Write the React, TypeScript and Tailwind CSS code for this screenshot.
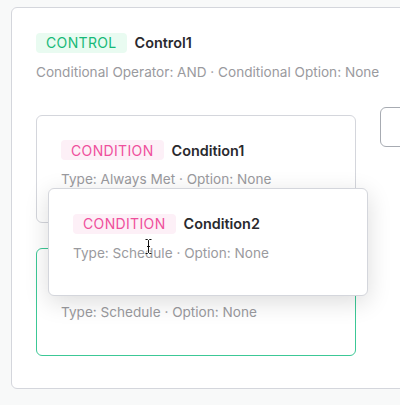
import React from "react";

function Badge({ kind }: { kind: "control" | "condition" }) {
  return kind === "control" ? (
    <span className="inline-flex h-5 items-center rounded-[4px] bg-[#e9fbf1] px-[10px] text-[14px] tracking-[0.35px] text-[#17b978]">
      CONTROL
    </span>
  ) : (
    <span className="inline-flex h-5 items-center rounded-[4px] bg-[#fdf0f7] px-[10px] text-[14px] tracking-[0.35px] text-[#ef4f9c]">
      CONDITION
    </span>
  );
}

const SUB = "text-[13.6px] leading-5 text-[#9a9a9e]";
const NAME = "text-[14.4px] font-semibold text-[#2a2a2e]";

function CondCard({
  name,
  sub,
  className,
}: {
  name: string;
  sub: string;
  className: string;
}) {
  return (
    <div className={"h-[108px] w-[320px] rounded-[6px] bg-white pl-6 pt-6 " + className}>
      <div className="flex items-center gap-2">
        <Badge kind="condition" />
        <span className={NAME}>{name}</span>
      </div>
      <div className={"mt-[8px] " + SUB}>{sub}</div>
    </div>
  );
}

export default function App() {
  return (
    <div
      className="relative h-[405px] w-[400px] overflow-hidden bg-[#f8f9f9] pl-[11px] pt-[7px]"
      style={{ fontFamily: "Inter, 'Noto Sans', sans-serif" }}
    >
      <div className="w-[440px] rounded-[6px] border border-[#d4d6dc] bg-white pb-[32px] pl-6 pt-[24px]">
        <div className="flex items-center gap-2">
          <Badge kind="control" />
          <span className={NAME}>Control1</span>
        </div>
        <div className={"mt-[8px] " + SUB}>
          Conditional Operator: AND · Conditional Option: None
        </div>
        <div className="mt-[33px] flex items-start gap-6">
          <div className="flex flex-col gap-[25px]">
            <CondCard
              name="Condition1"
              sub="Type: Always Met · Option: None"
              className="border border-[#d4d6dc]"
            />
            <div className="h-[108px] w-[320px] rounded-[6px] border border-[#3cc896] bg-white pl-6 pt-[53px]">
              <div className={SUB}>Type: Schedule · Option: None</div>
            </div>
          </div>
          <div className="-mt-2 h-10 w-10 rounded-[6px] border border-[#a7abb2] bg-white" />
        </div>
      </div>

      <div className="absolute left-[48px] top-[188px] h-[108px] w-[320px] rounded-[6px] border border-[#d4d6dc] bg-white pl-6 pt-[24px] shadow-[0_6px_24px_rgba(0,0,0,0.14)]">
        <div className="flex items-center gap-2">
          <Badge kind="condition" />
          <span className={NAME}>Condition2</span>
        </div>
        <div className={"mt-[8px] " + SUB}>Type: Schedule · Option: None</div>
      </div>

      <svg
        className="absolute left-[145px] top-[239px]"
        width="7"
        height="15"
        viewBox="0 0 7 15"
      >
        <path
          d="M0.5 0.5 H2.5 L3.5 1.5 L4.5 0.5 H6.5 M3.5 1.5 V13.5 M0.5 14.5 H2.5 L3.5 13.5 L4.5 14.5 H6.5 M2 7.5 H5"
          stroke="#ffffff"
          strokeWidth="2.2"
          fill="none"
        />
        <path
          d="M0.5 0.5 H2.5 L3.5 1.5 L4.5 0.5 H6.5 M3.5 1.5 V13.5 M0.5 14.5 H2.5 L3.5 13.5 L4.5 14.5 H6.5 M2 7.5 H5"
          stroke="#111111"
          strokeWidth="1"
          fill="none"
        />
      </svg>
    </div>
  );
}
